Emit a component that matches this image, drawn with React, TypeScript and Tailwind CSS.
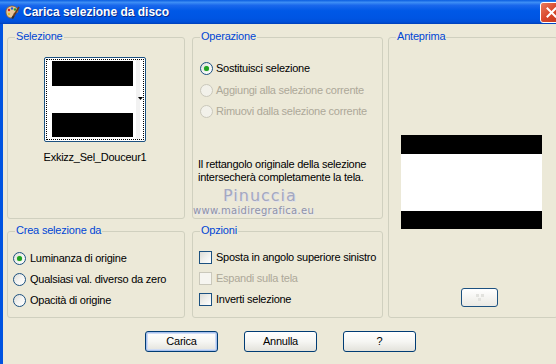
import React from "react";

function Radio({ checked = false, disabled = false }: { checked?: boolean; disabled?: boolean }) {
  return (
    <span
      className={
        disabled
          ? "inline-flex h-[13px] w-[13px] shrink-0 items-center justify-center rounded-full border border-[#cac8bb] bg-[#f2f1ea]"
          : "inline-flex h-[13px] w-[13px] shrink-0 items-center justify-center rounded-full border border-[#1c5180] bg-gradient-to-br from-[#dcdcd7] via-[#f4f4f2] to-white"
      }
    >
      {checked && <span className="h-[5px] w-[5px] rounded-full bg-[#21a121] shadow-[0_0_1px_#5cd35c]" />}
    </span>
  );
}

function Check({ disabled = false }: { disabled?: boolean }) {
  return (
    <span
      className={
        disabled
          ? "inline-block h-[13px] w-[13px] shrink-0 border border-[#cac8bb] bg-[#f6f5f0]"
          : "inline-block h-[13px] w-[13px] shrink-0 border border-[#1c5180] bg-gradient-to-br from-[#dcdcd7] via-[#f0f0ec] to-white"
      }
    />
  );
}

function Group({
  title,
  className,
  children,
}: {
  title: string;
  className?: string;
  children?: React.ReactNode;
}) {
  return (
    <div className={"relative rounded-[3px] border border-[#d0d0bf] " + (className ?? "")}>
      <span className="absolute left-[7px] top-[-8px] bg-[#ece9d8] px-[1px] text-[11px] leading-[13px] tracking-[-0.2px] text-[#0046d5]">
        {title}
      </span>
      {children}
    </div>
  );
}

function XpButton({ label, def = false }: { label: string; def?: boolean }) {
  return (
    <div
      className={
        "flex h-[21px] w-[73px] items-center justify-center rounded-[3px] border border-[#003c74] bg-gradient-to-b from-white via-[#f6f6f3] to-[#e3e2db] text-[11px] text-black " +
        (def ? "shadow-[inset_0_0_0_1px_#a6c0ee,inset_0_0_0_2px_#cfdcf5]" : "")
      }
    >
      {label}
    </div>
  );
}

function PaletteIcon() {
  return (
    <svg width="16" height="16" viewBox="0 0 16 16">
      <path d="M2 8c0-4 3-6 6-6s6 2 6 5c0 2-2 2-3 2s-1.5 1-1 2-0.5 3-3 3C4 14 2 11 2 8z" fill="#e8c79a" stroke="#8a5a2a" strokeWidth="0.8" />
      <circle cx="5" cy="6" r="1.2" fill="#d02020" />
      <circle cx="8" cy="4.5" r="1.2" fill="#2060d0" />
      <circle cx="11" cy="5.5" r="1.2" fill="#20a030" />
      <circle cx="5" cy="10" r="1.2" fill="#e0c020" />
      <path d="M9 13 L15 3" stroke="#6a3a1a" strokeWidth="1.6" />
      <path d="M8.2 14.5 L9.6 12" stroke="#303030" strokeWidth="2" />
    </svg>
  );
}

export default function App() {
  return (
    <div
      className="flex h-[364px] w-[556px] flex-col overflow-hidden bg-[#ece9d8]"
      style={{ fontFamily: '"Liberation Sans", Arial, sans-serif' }}
    >
      {/* title bar */}
      <div className="flex h-[24px] shrink-0 items-center bg-[linear-gradient(to_bottom,#0a5de0_0%,#3d8ef5_10%,#1a68ec_22%,#0058e6_45%,#0055e3_75%,#004fd8_92%,#003fb8_100%)] pl-[4px]">
        <PaletteIcon />
        <span className="ml-[3px] whitespace-nowrap text-[12px] font-bold leading-none text-white [text-shadow:1px_1px_0_#0a2a8a]">
          Carica selezione da disco
        </span>
        <div className="ml-auto mr-[-6px] flex h-[21px] w-[22px] items-center justify-center rounded-[3px] border border-white bg-gradient-to-br from-[#e87a5c] via-[#d9462a] to-[#c23a1e]">
          <svg width="11" height="11" viewBox="0 0 11 11">
            <path d="M1.5 1.5 L9.5 9.5 M9.5 1.5 L1.5 9.5" stroke="white" strokeWidth="2" strokeLinecap="square" />
          </svg>
        </div>
      </div>

      {/* body */}
      <div className="flex flex-1 flex-col border-l-[3px] border-[#0053e1] pl-[4px] pt-[13px] tracking-[-0.25px]">
        <div className="flex">
          <div className="grid grid-cols-[178px_191px] grid-rows-[182px_87px] gap-x-[7px] gap-y-[12px]">
            <Group title="Selezione">
              <div className="flex flex-col items-center pr-[2px] pt-[19px]">
                <div className="flex h-[85px] w-[102px] rounded-[2px] border border-[#1c5180] bg-white p-[1px]">
                  <div className="relative flex flex-1 border border-dotted border-black bg-white pl-[5px] pr-[10px] pt-[1px] pb-[2px]">
                    <div className="flex flex-1 flex-col">
                      <div className="h-[25px] bg-black" />
                      <div className="flex-1 bg-white" />
                      <div className="h-[24px] bg-black" />
                    </div>
                    <div className="absolute right-[3px] top-0 bottom-0 w-[4px] bg-[#f2f2f2]" />
                    <svg className="absolute right-[0px] top-[37px]" width="5" height="3" viewBox="0 0 5 3">
                      <path d="M0 0 H5 L2.5 3 Z" fill="black" />
                    </svg>
                  </div>
                </div>
                <div className="mt-[9px] whitespace-nowrap text-[11px] leading-[13px] text-black">Exkizz_Sel_Douceur1</div>
              </div>
            </Group>

            <Group title="Operazione">
              <div className="flex flex-col whitespace-nowrap pl-[7px] pt-[24px] text-[11px] leading-[13px]">
                <div className="flex h-[13px] items-center gap-[3px] text-black">
                  <Radio checked />
                  <span>Sostituisci selezione</span>
                </div>
                <div className="mt-[9px] flex h-[13px] items-center gap-[3px] text-[#aca899]">
                  <Radio disabled />
                  <span>Aggiungi alla selezione corrente</span>
                </div>
                <div className="mt-[8px] flex h-[13px] items-center gap-[3px] text-[#aca899]">
                  <Radio disabled />
                  <span>Rimuovi dalla selezione corrente</span>
                </div>
                <div className="mt-[40px] text-black">
                  <div className="ml-[-2px]">Il rettangolo originale della selezione</div>
                  <div className="ml-[-2px]">intersecherà completamente la tela.</div>
                </div>
              </div>
              <div
                className="absolute left-[30px] top-[150px] text-[16px] leading-none tracking-[1px] text-[#a4a8c0] [text-shadow:1px_1px_0_#e0e0ea]"
                style={{ fontFamily: '"DejaVu Sans", sans-serif' }}
              >
                Pinuccia
              </div>
              <div
                className="absolute left-[0px] top-[168px] whitespace-nowrap text-[10px] leading-none tracking-[0.3px] text-[#8e92aa] [text-shadow:1px_1px_0_#e8e8ee]"
                style={{ fontFamily: '"DejaVu Sans", sans-serif' }}
              >
                www.maidiregrafica.eu
              </div>
            </Group>

            <Group title="Crea selezione da">
              <div className="flex flex-col gap-[8px] whitespace-nowrap pl-[5px] pt-[20px] text-[11px] leading-[13px] text-black">
                <div className="flex h-[13px] items-center gap-[4px]">
                  <Radio checked />
                  <span>Luminanza di origine</span>
                </div>
                <div className="flex h-[13px] items-center gap-[4px]">
                  <Radio />
                  <span>Qualsiasi val. diverso da zero</span>
                </div>
                <div className="flex h-[13px] items-center gap-[4px]">
                  <Radio />
                  <span>Opacità di origine</span>
                </div>
              </div>
            </Group>

            <Group title="Opzioni">
              <div className="flex flex-col gap-[8px] whitespace-nowrap pl-[6px] pt-[19px] text-[11px] leading-[13px] text-black">
                <div className="flex h-[13px] items-center gap-[4px]">
                  <Check />
                  <span>Sposta in angolo superiore sinistro</span>
                </div>
                <div className="flex h-[13px] items-center gap-[4px] text-[#aca899]">
                  <Check disabled />
                  <span>Espandi sulla tela</span>
                </div>
                <div className="flex h-[13px] items-center gap-[4px]">
                  <Check />
                  <span>Inverti selezione</span>
                </div>
              </div>
            </Group>
          </div>

          <Group title="Anteprima" className="ml-[5px] h-[281px] w-[170px] shrink-0">
            <div className="flex flex-col pl-[12px] pt-[97px]">
              <div className="flex h-[94px] w-[141px] flex-col">
                <div className="h-[19px] bg-black" />
                <div className="flex-1 bg-white" />
                <div className="h-[18px] bg-black" />
              </div>
              <div className="ml-[60px] mt-[59px] flex h-[19px] w-[37px] items-center justify-center rounded-[3px] border border-[#1c5180] bg-gradient-to-b from-white to-[#ebeae4]">
                <svg width="12" height="8" viewBox="0 0 12 8">
                  <rect x="2" y="0" width="3" height="3" fill="#e2e2de" />
                  <rect x="7" y="0" width="3" height="3" fill="#e2e2de" />
                  <rect x="4" y="4" width="3" height="3" fill="#e2e2de" />
                </svg>
              </div>
            </div>
          </Group>
        </div>

        <div className="mt-[13px] flex gap-[26px] pl-[138px]">
          <XpButton label="Carica" def />
          <XpButton label="Annulla" />
          <XpButton label="?" />
        </div>
      </div>
    </div>
  );
}
